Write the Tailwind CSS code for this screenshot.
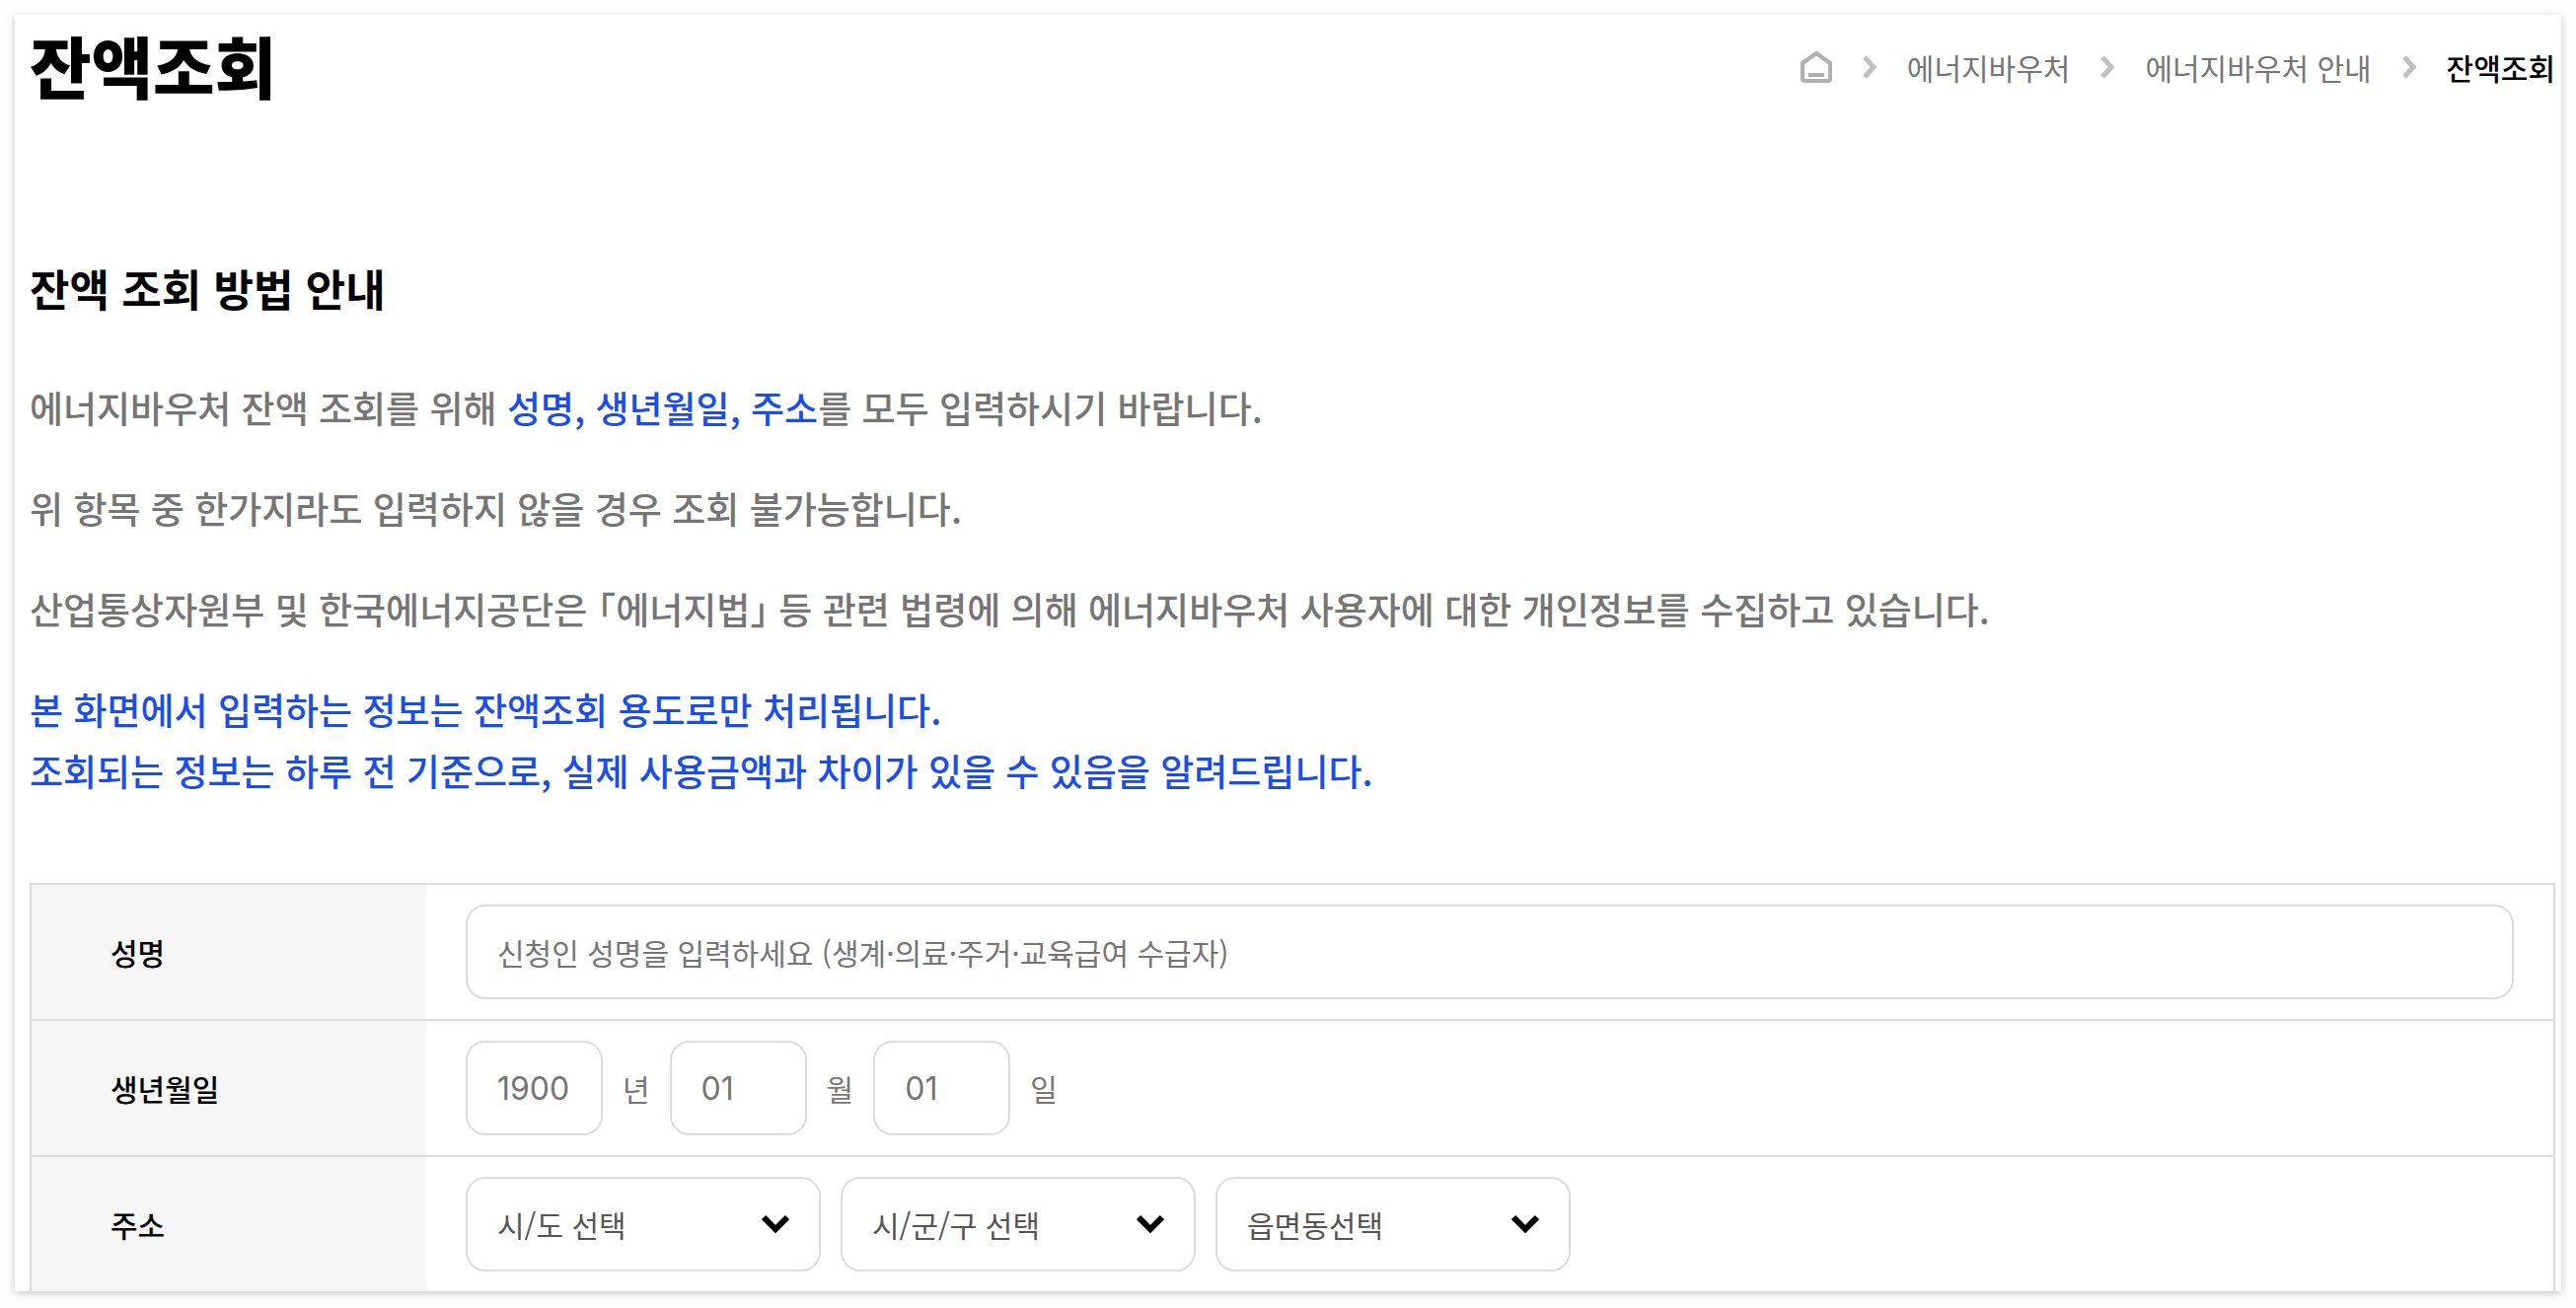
<!DOCTYPE html>
<html lang="ko">
<head>
  <meta charset="UTF-8" />
  <meta name="viewport" content="width=device-width, initial-scale=1.0" />
  <title>잔액조회</title>
  <script src="https://cdn.jsdelivr.net/npm/@tailwindcss/browser@4"></script>
</head>
<body class="bg-[#fdfdfd] p-[15px] pb-4 font-['Noto_Sans_CJK_KR',sans-serif] text-[30px] text-[#757575]">
  <main class="bg-white pr-[6px] pl-[15px] shadow-[0_2px_8px_rgba(0,0,0,0.22)]">

    <!-- Page title + breadcrumb -->
    <header class="flex items-center justify-between pt-[5px]">
      <h1 class="text-[68px] leading-[92px] font-black text-black">잔액조회</h1>
      <nav aria-label="breadcrumb" class="pt-1">
        <ol class="flex items-center">
          <li>
            <a href="#" aria-label="홈" class="block">
              <svg class="h-8 w-8" viewBox="0 0 32 32" fill="none" stroke="#b0b0b0" stroke-width="4" stroke-linejoin="round">
                <path d="M2 12 16 2 30 12V28Q30 30 28 30H4Q2 30 2 28Z" />
                <path d="M8 24H24" />
              </svg>
            </a>
          </li>
          <li class="flex items-center">
            <svg class="mx-[31px] h-6 w-[14px]" viewBox="0 0 14 24" fill="none" stroke="#c0c0c0" stroke-width="5"><path d="M2 2 11 12 2 22" /></svg>
            <a href="#">에너지바우처</a>
          </li>
          <li class="flex items-center">
            <svg class="mx-[31px] h-6 w-[14px]" viewBox="0 0 14 24" fill="none" stroke="#c0c0c0" stroke-width="5"><path d="M2 2 11 12 2 22" /></svg>
            <a href="#">에너지바우처 안내</a>
          </li>
          <li class="flex items-center">
            <svg class="mx-[31px] h-6 w-[14px]" viewBox="0 0 14 24" fill="none" stroke="#c0c0c0" stroke-width="5"><path d="M2 2 11 12 2 22" /></svg>
            <a href="#" aria-current="page" class="font-medium text-black">잔액조회</a>
          </li>
        </ol>
      </nav>
    </header>

    <!-- Guide -->
    <section class="pt-[146px] text-[37px] leading-[62px] font-medium">
      <h2 class="text-[44px] leading-[68px] font-bold text-black">잔액 조회 방법 안내</h2>
      <div class="mt-14 space-y-10">
        <p>에너지바우처 잔액 조회를 위해 <span class="text-[#1a4ee6]">성명, 생년월일, 주소</span>를 모두 입력하시기 바랍니다.</p>
        <p>위 항목 중 한가지라도 입력하지 않을 경우 조회 불가능합니다.</p>
        <p>산업통상자원부 및 한국에너지공단은 <span class="[font-feature-settings:'halt']">「</span>에너지법<span class="[font-feature-settings:'halt']">」</span> 등 관련 법령에 의해 에너지바우처 사용자에 대한 개인정보를 수집하고 있습니다.</p>
        <p class="text-[#1a4ee6]">본 화면에서 입력하는 정보는 잔액조회 용도로만 처리됩니다.<br />조회되는 정보는 하루 전 기준으로, 실제 사용금액과 차이가 있을 수 있음을 알려드립니다.</p>
      </div>
    </section>

    <!-- Lookup form -->
    <form class="mt-[83px]">
      <table class="w-full border-collapse border-2 border-b-0 border-[#dcdcdc]">
        <tbody>
          <tr class="border-b-2 border-[#dcdcdc]">
            <th scope="row" class="w-[401px] bg-[#f5f5f5] pl-20 text-left font-medium text-black"><label for="userName">성명</label></th>
            <td class="px-10 py-5">
              <input type="text" id="userName" placeholder="신청인 성명을 입력하세요 (생계·의료·주거·교육급여 수급자)" class="block h-24 w-full rounded-[20px] border-2 border-[#dcdcdc] px-[30px] placeholder:text-[#757575]" />
            </td>
          </tr>
          <tr class="border-b-2 border-[#dcdcdc]">
            <th scope="row" class="bg-[#f5f5f5] pl-20 text-left font-medium text-black"><label for="birthYear">생년월일</label></th>
            <td class="px-10 py-5">
              <div class="flex items-center gap-5">
                <input type="text" id="birthYear" placeholder="1900" class="h-24 w-[139px] rounded-[20px] border-2 border-[#dcdcdc] pl-[30px] font-[Inter] text-[32px] placeholder:text-[#757575]" />
                <label for="birthYear">년</label>
                <input type="text" id="birthMonth" placeholder="01" class="h-24 w-[139px] rounded-[20px] border-2 border-[#dcdcdc] pl-[30px] font-[Inter] text-[32px] placeholder:text-[#757575]" />
                <label for="birthMonth">월</label>
                <input type="text" id="birthDay" placeholder="01" class="h-24 w-[139px] rounded-[20px] border-2 border-[#dcdcdc] pl-[30px] font-[Inter] text-[32px] placeholder:text-[#757575]" />
                <label for="birthDay">일</label>
              </div>
            </td>
          </tr>
          <tr>
            <th scope="row" class="bg-[#f5f5f5] pl-20 text-left font-medium text-black"><label for="sido">주소</label></th>
            <td class="px-10 py-5">
              <div class="flex gap-5 text-[#555]">
                <div class="relative">
                  <select id="sido" class="h-24 w-[360px] appearance-none rounded-[20px] border-2 border-[#dcdcdc] pl-[30px]"><option>시/도 선택</option></select>
                  <svg class="pointer-events-none absolute top-9 right-8 h-6 w-7" viewBox="0 0 28 24" fill="none" stroke="#000" stroke-width="6"><path d="M2 5 14 17 26 5" /></svg>
                </div>
                <div class="relative">
                  <select id="sigungu" aria-label="시/군/구" class="h-24 w-[360px] appearance-none rounded-[20px] border-2 border-[#dcdcdc] pl-[30px]"><option>시/군/구 선택</option></select>
                  <svg class="pointer-events-none absolute top-9 right-8 h-6 w-7" viewBox="0 0 28 24" fill="none" stroke="#000" stroke-width="6"><path d="M2 5 14 17 26 5" /></svg>
                </div>
                <div class="relative">
                  <select id="dong" aria-label="읍면동" class="h-24 w-[360px] appearance-none rounded-[20px] border-2 border-[#dcdcdc] pl-[30px]"><option>읍면동선택</option></select>
                  <svg class="pointer-events-none absolute top-9 right-8 h-6 w-7" viewBox="0 0 28 24" fill="none" stroke="#000" stroke-width="6"><path d="M2 5 14 17 26 5" /></svg>
                </div>
              </div>
            </td>
          </tr>
        </tbody>
      </table>
    </form>
  </main>
</body>
</html>
